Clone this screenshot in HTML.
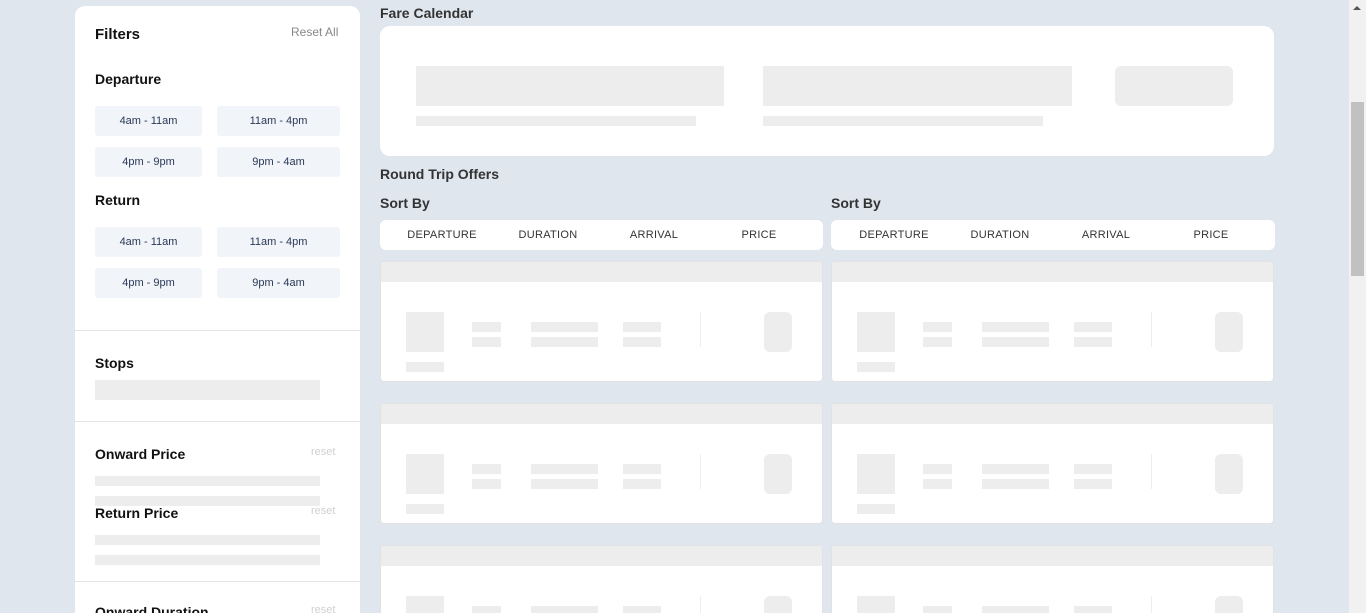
<!DOCTYPE html>
<html><head><style>
html,body{margin:0;width:1366px;height:613px;overflow:hidden}
body{background:#e0e6ee;font-family:"Liberation Sans",sans-serif;position:relative}
div{position:absolute;box-sizing:border-box}
.g{background:#ededed}
.t{font-weight:bold;color:#111;font-size:14px}
.btn{background:#f1f4f8;border-radius:3px;font-size:11px;color:#2a3858;text-align:center;line-height:30px;height:30px}
.hr{left:0;width:285px;height:1px;background:#e4e4e4}
.rs{font-size:11px;color:#d0d0d0;left:236px}
.sec{font-size:14px;font-weight:bold;color:#333}
.sort{background:#fff;border-radius:6px;height:30px;font-size:11px;color:#333;letter-spacing:.3px}
.sort span{position:absolute;top:9px;transform:translateX(-50%)}
.card{background:#fff;border:1px solid #e2e2e2;border-radius:4px;width:443px;height:121px;overflow:hidden}
#wrap{left:0;top:0;width:1366px;height:613px;overflow:hidden}
</style></head><body><div id="wrap">
<div style="left:75px;top:6px;width:285px;height:640px;background:#fff;border-radius:10px">
 <div class="t" style="left:20px;top:20px;font-size:15px">Filters</div>
 <div style="left:216px;top:19px;font-size:12px;color:#888">Reset All</div>
 <div class="t" style="left:20px;top:65px">Departure</div>
 <div class="btn" style="left:20px;top:100px;width:107px">4am - 11am</div>
 <div class="btn" style="left:142px;top:100px;width:123px">11am - 4pm</div>
 <div class="btn" style="left:20px;top:141px;width:107px">4pm - 9pm</div>
 <div class="btn" style="left:142px;top:141px;width:123px">9pm - 4am</div>
 <div class="t" style="left:20px;top:186px">Return</div>
 <div class="btn" style="left:20px;top:221px;width:107px">4am - 11am</div>
 <div class="btn" style="left:142px;top:221px;width:123px">11am - 4pm</div>
 <div class="btn" style="left:20px;top:262px;width:107px">4pm - 9pm</div>
 <div class="btn" style="left:142px;top:262px;width:123px">9pm - 4am</div>
 <div class="hr" style="top:324px"></div>
 <div class="t" style="left:20px;top:349px">Stops</div>
 <div class="g" style="left:20px;top:374px;width:225px;height:20px"></div>
 <div class="hr" style="top:415px"></div>
 <div class="t" style="left:20px;top:440px">Onward Price</div>
 <div class="rs" style="top:440px">reset</div>
 <div class="g" style="left:20px;top:470px;width:225px;height:10px"></div>
 <div class="g" style="left:20px;top:490px;width:225px;height:10px"></div>
 <div class="t" style="left:20px;top:499px">Return Price</div>
 <div class="rs" style="top:499px">reset</div>
 <div class="g" style="left:20px;top:529px;width:225px;height:10px"></div>
 <div class="g" style="left:20px;top:549px;width:225px;height:10px"></div>
 <div class="hr" style="top:575px"></div>
 <div class="t" style="left:20px;top:598px">Onward Duration</div>
 <div class="rs" style="top:598px">reset</div>
</div>
<div class="sec" style="left:380px;top:5px">Fare Calendar</div>
<div style="left:380px;top:26px;width:894px;height:130px;background:#fff;border-radius:10px">
 <div class="g" style="left:36px;top:40px;width:308px;height:40px"></div>
 <div class="g" style="left:36px;top:90px;width:280px;height:10px"></div>
 <div class="g" style="left:383px;top:40px;width:309px;height:40px"></div>
 <div class="g" style="left:383px;top:90px;width:280px;height:10px"></div>
 <div class="g" style="left:735px;top:40px;width:118px;height:40px;border-radius:6px"></div>
</div>
<div class="sec" style="left:380px;top:166px">Round Trip Offers</div>
<div class="sec" style="left:380px;top:195px">Sort By</div>
<div class="sec" style="left:831px;top:195px">Sort By</div>
<div class="sort" style="left:380px;top:220px;width:443px"><span style="left:62px">DEPARTURE</span><span style="left:168px">DURATION</span><span style="left:274px">ARRIVAL</span><span style="left:379px">PRICE</span></div>
<div class="sort" style="left:831px;top:220px;width:444px"><span style="left:63px">DEPARTURE</span><span style="left:169px">DURATION</span><span style="left:275px">ARRIVAL</span><span style="left:380px">PRICE</span></div>
<div id="cards" style="left:0;top:0;width:1366px;height:613px"></div>
<div style="left:1349px;top:0;width:17px;height:613px;background:#f1f1f1"></div>
<div style="left:1351px;top:102px;width:13px;height:174px;background:#c1c1c1"></div>
<div style="left:1353px;top:6px;width:0;height:0;border-left:4px solid transparent;border-right:4px solid transparent;border-bottom:4px solid #555"></div>
</div>
<script>
const xs=[380,831],ys=[261,403,545];let h='';
for(const y of ys)for(const x of xs){
h+=`<div class="card" style="left:${x}px;top:${y}px">
<div class="g" style="left:0;top:0;width:100%;height:20px"></div>
<div class="g" style="left:25px;top:50px;width:38px;height:40px"></div>
<div class="g" style="left:25px;top:100px;width:38px;height:10px"></div>
<div class="g" style="left:91px;top:60px;width:29px;height:10px"></div>
<div class="g" style="left:91px;top:75px;width:29px;height:10px"></div>
<div class="g" style="left:150px;top:60px;width:67px;height:10px"></div>
<div class="g" style="left:150px;top:75px;width:67px;height:10px"></div>
<div class="g" style="left:242px;top:60px;width:38px;height:10px"></div>
<div class="g" style="left:242px;top:75px;width:38px;height:10px"></div>
<div style="left:319px;top:50px;width:1px;height:35px;background:#eee"></div>
<div class="g" style="left:383px;top:50px;width:28px;height:40px;border-radius:6px"></div>
</div>`;}
document.getElementById('cards').innerHTML=h;
</script>
</body></html>
